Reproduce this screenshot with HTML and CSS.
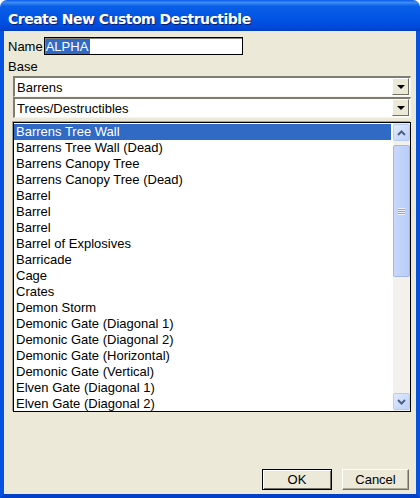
FILE: index.html
```html
<!DOCTYPE html>
<html lang="en">
<head>
  <meta charset="UTF-8" />
  <title>Create New Custom Destructible</title>
  <link rel="stylesheet" href="styles.css">
</head>
<body>

  <div class="window">
    <div class="titlebar">Create New Custom Destructible</div>

    <div class="client">
      <div class="name-row">
        <span class="label">Name</span>
        <div class="textbox"><span class="selected">ALPHA</span></div>
      </div>

      <div class="label base-label">Base</div>

      <div class="combo">
        <span class="combo-text">Barrens</span>
        <span class="combo-btn"><span class="tri"></span></span>
      </div>
      <div class="combo">
        <span class="combo-text">Trees/Destructibles</span>
        <span class="combo-btn"><span class="tri"></span></span>
      </div>

      <div class="listbox">
        <ul class="items">
          <li class="active">Barrens Tree Wall</li>
          <li>Barrens Tree Wall (Dead)</li>
          <li>Barrens Canopy Tree</li>
          <li>Barrens Canopy Tree (Dead)</li>
          <li>Barrel</li>
          <li>Barrel</li>
          <li>Barrel</li>
          <li>Barrel of Explosives</li>
          <li>Barricade</li>
          <li>Cage</li>
          <li>Crates</li>
          <li>Demon Storm</li>
          <li>Demonic Gate (Diagonal 1)</li>
          <li>Demonic Gate (Diagonal 2)</li>
          <li>Demonic Gate (Horizontal)</li>
          <li>Demonic Gate (Vertical)</li>
          <li>Elven Gate (Diagonal 1)</li>
          <li>Elven Gate (Diagonal 2)</li>
        </ul>
        <div class="scrollbar">
          <div class="sb-btn">
            <svg width="9" height="6" viewBox="0 0 9 6"><path d="M1 5 L4.5 1.5 L8 5" fill="none" stroke="#4d6185" stroke-width="2"/></svg>
          </div>
          <div class="sb-track">
            <div class="sb-thumb">
              <span class="grip"></span>
            </div>
          </div>
          <div class="sb-btn">
            <svg width="9" height="6" viewBox="0 0 9 6"><path d="M1 1 L4.5 4.5 L8 1" fill="none" stroke="#4d6185" stroke-width="2"/></svg>
          </div>
        </div>
      </div>

      <div class="buttons">
        <button class="btn default">OK</button>
        <button class="btn">Cancel</button>
      </div>
    </div>
  </div>

</body>
</html>
```

FILE: styles.css
```css
* { box-sizing: border-box; }
body {
  margin: 0;
  background: #ffffff;
  font-family: 'Liberation Sans', Arial, sans-serif;
  font-size: 13px;
  color: #000;
}

.window {
  width: 420px;
  height: 498px;
  display: flex;
  flex-direction: column;
}

.titlebar {
  height: 31px;
  padding: 11px 0 0 8px;
  border-radius: 7px 7px 0 0;
  background: linear-gradient(#0a5ce8 0%, #3d8bf6 8%, #0a5fe8 20%, #0054e3 60%, #0048d8 90%, #003dc0 100%);
  color: #fff;
  font-family: 'DejaVu Sans', sans-serif;
  font-weight: bold;
  font-size: 14px;
  line-height: 16px;
  letter-spacing: -0.5px;
  text-shadow: 1px 1px 0 #0a1e6e;
}

.client {
  flex: 1;
  display: flex;
  flex-direction: column;
  background: #ece9d8;
  border-left: 4px solid #0652e0;
  border-right: 4px solid #0652e0;
  border-bottom: 4px solid #0340c8;
  padding: 6px 5px 4px 4px;
}

/* Name */
.name-row {
  display: flex;
  align-items: center;
  height: 18px;
}

.label {
  line-height: 15px;
}

.textbox {
  width: 199px;
  height: 18px;
  margin-left: 1px;
  background: #fff;
  border: 1px solid #000;
  box-shadow: inset 1px 1px 0 #808080;
  padding: 1px 0 0 1px;
  line-height: 15px;
}

.textbox .selected {
  background: #316ac5;
  color: #fff;
  display: inline-block;
  padding-right: 2px;
}

.base-label {
  margin: 4px 0 2px;
}

/* Combos */
.combo {
  display: flex;
  margin-left: 5px;
  height: 21px;
  background: #fff;
  border-top: 2px solid #7f7c72;
  border-left: 2px solid #7f7c72;
  border-right: 1px solid #f6f5ef;
  border-bottom: 1px solid #f6f5ef;
}

.combo-text {
  flex: 1;
  padding: 2px 0 0 2px;
  line-height: 15px;
}

.combo-btn {
  width: 17px;
  margin: 0 1px 1px 0;
  background: #ece9d8;
  border-top: 1px solid #fff;
  border-left: 1px solid #fff;
  border-right: 1px solid #716f64;
  border-bottom: 1px solid #716f64;
  display: flex;
  align-items: center;
  justify-content: center;
}

.tri {
  width: 0;
  height: 0;
  border-left: 4px solid transparent;
  border-right: 4px solid transparent;
  border-top: 4px solid #000;
}

/* List */
.listbox {
  display: flex;
  margin: 4px 0 0 5px;
  height: 290px;
  background: #fff;
  border: 1px solid #000;
  box-shadow: -1px -1px 0 #a5a291;
}

.items {
  flex: 1;
  list-style: none;
  margin: 0;
  padding: 1px 2px 0 0;
}

.items li {
  height: 16px;
  line-height: 16px;
  padding-left: 2px;
  white-space: nowrap;
}

.items li.active {
  background: #316ac5;
  color: #fff;
}

.scrollbar {
  width: 17px;
  display: flex;
  flex-direction: column;
  background: #f3f1ec;
}

.sb-btn {
  height: 17px;
  margin: 1px 0;
  display: flex;
  align-items: center;
  justify-content: center;
  background: linear-gradient(135deg, #e2ebfe, #bdd0f8);
  border: 1px solid #b8ccf3;
  border-radius: 2px;
}

.sb-track {
  flex: 1;
}

.sb-thumb {
  height: 132px;
  margin-top: 3px;
  background: linear-gradient(90deg, #c9d8fb, #b9cdf9);
  border: 1px solid #a2b8ea;
  border-radius: 2px;
  display: flex;
  align-items: center;
  justify-content: center;
}

.grip {
  width: 7px;
  height: 7px;
  background: repeating-linear-gradient(#eef3ff 0 1px, #8ba5dc 1px 2px);
}

/* Buttons */
.buttons {
  margin-top: auto;
  display: flex;
  justify-content: flex-end;
  gap: 10px;
  padding-right: 2px;
}

.btn {
  font-family: 'Liberation Sans', Arial, sans-serif;
  font-size: 13px;
  height: 21px;
  width: 67px;
  padding: 0;
  background: #ece9d8;
  border-top: 1px solid #fff;
  border-left: 1px solid #fff;
  border-right: 1px solid #716f64;
  border-bottom: 1px solid #716f64;
  box-shadow: inset -1px -1px 0 #aca899;
  color: #000;
}

.btn.default {
  width: 70px;
  border: 1px solid #000;
  box-shadow: inset 1px 1px 0 #fff, inset -1px -1px 0 #716f64;
}
```
